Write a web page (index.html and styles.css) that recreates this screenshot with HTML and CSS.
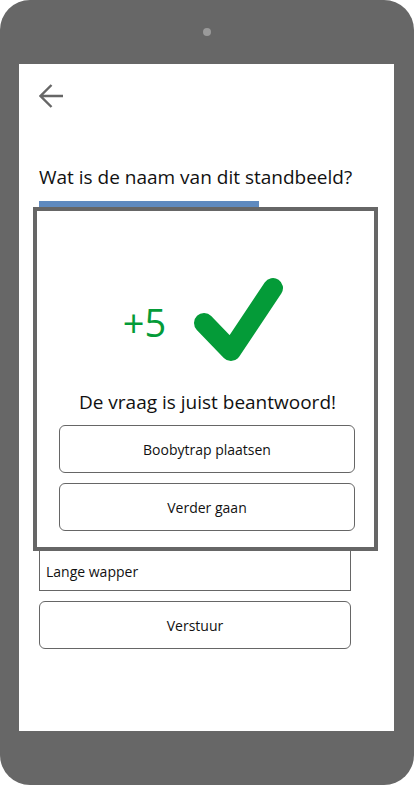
FILE: index.html
```html
<!DOCTYPE html>
<html lang="nl">
<head>
<meta charset="utf-8">
<title>Vraag</title>
<link rel="stylesheet" href="styles.css">
</head>
<body>
<div class="phone">
  <div class="camera"></div>
  <div class="screen">
    <button class="back" aria-label="Terug">
      <svg width="24" height="24" viewBox="0 0 24 24">
        <path d="M1.5 12H24M12.5 1L1.5 12L12.5 23" fill="none" stroke="#666" stroke-width="2.4"/>
      </svg>
    </button>
    <h1 class="question">Wat is de naam van dit standbeeld?</h1>
    <div class="progress"></div>
    <div class="answer">Lange wapper</div>
    <button class="btn btn-wide">Verstuur</button>

    <div class="modal">
      <div class="result">
        <span class="points">+5</span>
        <svg class="check" width="100" height="100" viewBox="0 0 100 100">
          <path d="M16 53L43 81L85 18" fill="none" stroke="#049b38" stroke-width="20" stroke-linecap="round" stroke-linejoin="round"/>
        </svg>
      </div>
      <p class="message">De vraag is juist beantwoord!</p>
      <div class="actions">
        <button class="btn">Boobytrap plaatsen</button>
        <button class="btn">Verder gaan</button>
      </div>
    </div>
  </div>
</div>
</body>
</html>
```

FILE: styles.css
```css
* { box-sizing: border-box; }
html, body { margin: 0; padding: 0; background: #fff; }
body { font-family: "Open Sans", "Noto Sans", sans-serif; color: #111; }

.phone {
  width: 414px;
  height: 785px;
  background: #676767;
  border-radius: 30px;
  padding: 64px 20px 54px 19px;
  position: relative;
}
.camera {
  position: absolute;
  left: 203px;
  top: 28px;
  width: 8px;
  height: 8px;
  border-radius: 50%;
  background: #9a9a9a;
}
.screen {
  width: 375px;
  height: 667px;
  background: #fff;
  position: relative;
  padding: 20px 43px 0 20px;
  display: flex;
  flex-direction: column;
  align-items: flex-start;
}
.back {
  border: 0;
  background: none;
  padding: 0;
  width: 24px;
  height: 24px;
  display: block;
}
.back svg { display: block; }
.question {
  font-weight: 400;
  font-size: 19px;
  line-height: 28px;
  margin: 55px 0 0 0;
  white-space: nowrap;
}
.progress {
  width: 220px;
  height: 8px;
  background: #5f8abf;
  margin-top: 10px;
}
.answer {
  margin-top: 338px;
  width: 312px;
  height: 44px;
  border: 1px solid #666;
  font-size: 14px;
  padding: 14px 0 0 6px;
  line-height: 20px;
}
.btn {
  font-family: inherit;
  font-size: 14px;
  color: #111;
  background: #fff;
  border: 1px solid #666;
  border-radius: 6px;
  height: 48px;
  width: 296px;
  padding: 0;
}
.btn-wide {
  width: 312px;
  margin-top: 10px;
}

.modal {
  position: absolute;
  left: 14px;
  top: 143px;
  width: 345px;
  height: 344px;
  background: #fff;
  border: 4px solid #666;
  display: flex;
  flex-direction: column;
  align-items: center;
  padding-top: 59px;
}
.result {
  display: flex;
  align-items: center;
  height: 100px;
  margin-left: 0;
}
.points {
  color: #049b38;
  font-size: 38px;
  line-height: 40px;
  margin-right: 22px;
  margin-top: 4px;
}
.check { display: block; }
.message {
  margin: 19px 0 0 0;
  font-size: 19px;
  line-height: 26px;
  margin-left: 4px;
}
.actions {
  margin-top: 10px;
  display: flex;
  flex-direction: column;
  gap: 10px;
  margin-left: 3px;
}
```
